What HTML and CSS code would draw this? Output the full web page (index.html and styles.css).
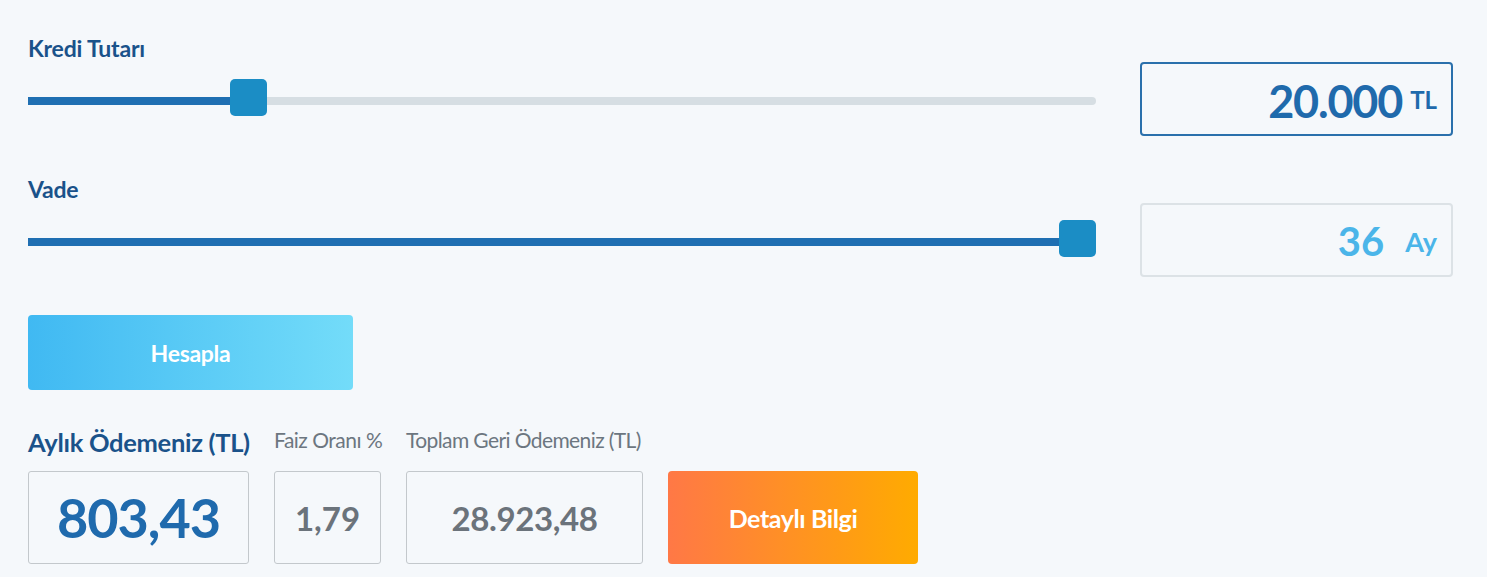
FILE: index.html
```html
<!DOCTYPE html>
<html lang="tr">
<head>
    <meta charset="UTF-8" />
    <meta name="viewport" content="width=device-width, initial-scale=1" />
    <title>Kredi Hesaplama</title>
    <link rel="stylesheet" href="styles.css">
</head>
<body>
    <div class="credit-calc">
        <div class="field">
            <div class="field-main">
                <label class="field-label">Kredi Tutarı</label>
                <div class="slider-wrap">
                    <div class="slider" style="--pos: 0.196">
                        <div class="slider-fill"></div>
                        <div class="slider-thumb"></div>
                    </div>
                </div>
            </div>
            <div class="value-box active">
                <span class="value">20.000</span>
                <span class="unit">TL</span>
            </div>
        </div>

        <div class="field">
            <div class="field-main">
                <label class="field-label">Vade</label>
                <div class="slider-wrap">
                    <div class="slider" style="--pos: 1">
                        <div class="slider-fill"></div>
                        <div class="slider-thumb"></div>
                    </div>
                </div>
            </div>
            <div class="value-box term">
                <span class="value">36</span>
                <span class="unit">Ay</span>
            </div>
        </div>

        <button class="btn-calc">Hesapla</button>

        <div class="results">
            <div class="result monthly">
                <div class="result-label">Aylık Ödemeniz (TL)</div>
                <div class="result-box">803,43</div>
            </div>
            <div class="result rate">
                <div class="result-label">Faiz Oranı %</div>
                <div class="result-box">1,79</div>
            </div>
            <div class="result total">
                <div class="result-label">Toplam Geri Ödemeniz (TL)</div>
                <div class="result-box">28.923,48</div>
            </div>
            <button class="btn-detail">Detaylı Bilgi</button>
        </div>
    </div>
</body>
</html>
```

FILE: styles.css
```css
* {
    box-sizing: border-box;
    margin: 0;
    padding: 0;
    font-family: Lato, "Liberation Sans", sans-serif;
}

body {
    background-color: #f5f8fb;
}

.credit-calc {
    width: 1425px;
    margin-left: 28px;
    padding-top: 34px;
}

.field {
    display: flex;
    align-items: flex-end;
    gap: 44px;
}

.field + .field {
    margin-top: 39px;
}

.field-main {
    flex: 1;
}

.field-label {
    display: block;
    font-size: 23px;
    line-height: 28px;
    font-weight: 700;
    color: #1a528a;
    letter-spacing: -0.2px;
}

.slider-wrap {
    height: 74px;
    display: flex;
    align-items: center;
    padding-top: 3px;
}

.slider {
    position: relative;
    width: 100%;
    height: 8px;
    background: #d6dee3;
    border-radius: 0 4px 4px 0;
}

.slider-fill {
    height: 100%;
    width: calc((100% - 37px) * var(--pos) + 18px);
    background: #1f6fb2;
}

.slider-thumb {
    position: absolute;
    top: -18px;
    left: calc((100% - 37px) * var(--pos));
    width: 37px;
    height: 37px;
    background: #1b8dc5;
    border-radius: 5px;
}

.value-box {
    width: 313px;
    height: 74px;
    border: 2px solid #dce2e6;
    border-radius: 4px;
    display: flex;
    justify-content: flex-end;
    align-items: center;
    padding-right: 14px;
}

.value-box.active {
    border-color: #2a70ac;
    color: #1f6aac;
    gap: 8px;
}

.value-box.active .value {
    font-size: 45px;
    font-weight: 700;
    letter-spacing: -1.2px;
    padding-top: 4px;
}

.value-box.active .unit {
    font-size: 24px;
    font-weight: 700;
}

.value-box.term {
    color: #4bb5e9;
    gap: 21px;
}

.value-box.term .value {
    font-size: 40px;
    font-weight: 700;
    padding-top: 2px;
}

.value-box.term .unit {
    font-size: 27px;
    font-weight: 700;
    padding-top: 2px;
}

button {
    border: none;
    border-radius: 4px;
    color: white;
    font-weight: 700;
    cursor: pointer;
}

.btn-calc {
    display: block;
    margin-top: 38px;
    width: 325px;
    height: 75px;
    font-size: 23px;
    letter-spacing: -0.3px;
    background: linear-gradient(to right, #40b9f2, #73dcf9);
}

/* Sonuçlar */
.results {
    display: flex;
    align-items: flex-end;
    gap: 25px;
    margin-top: 37px;
}

.result {
    flex: none;
}

.result-label {
    font-size: 21px;
    line-height: 25px;
    color: #6c7680;
    margin-bottom: 19px;
    letter-spacing: -0.5px;
    white-space: nowrap;
}

.monthly .result-label {
    font-size: 25.5px;
    line-height: 30px;
    font-weight: 700;
    color: #1a528a;
    margin-bottom: 14px;
    letter-spacing: -0.3px;
}

.result-box {
    height: 93px;
    border: 1px solid #c3c8cc;
    border-radius: 3px;
    display: flex;
    justify-content: center;
    align-items: center;
    font-size: 33px;
    font-weight: 700;
    color: #6b737b;
}

.monthly {
    width: 221px;
}

.monthly .result-box {
    font-size: 54px;
    color: #1f6aad;
    letter-spacing: -1px;
}

.rate {
    width: 107px;
}

.total {
    width: 237px;
}

.total .result-label {
    letter-spacing: -0.6px;
}

.total .result-box {
    letter-spacing: -0.4px;
}

.btn-detail {
    width: 250px;
    height: 93px;
    font-size: 25px;
    letter-spacing: -0.4px;
    background: linear-gradient(to right, #ff7846, #ffab00);
}
```
